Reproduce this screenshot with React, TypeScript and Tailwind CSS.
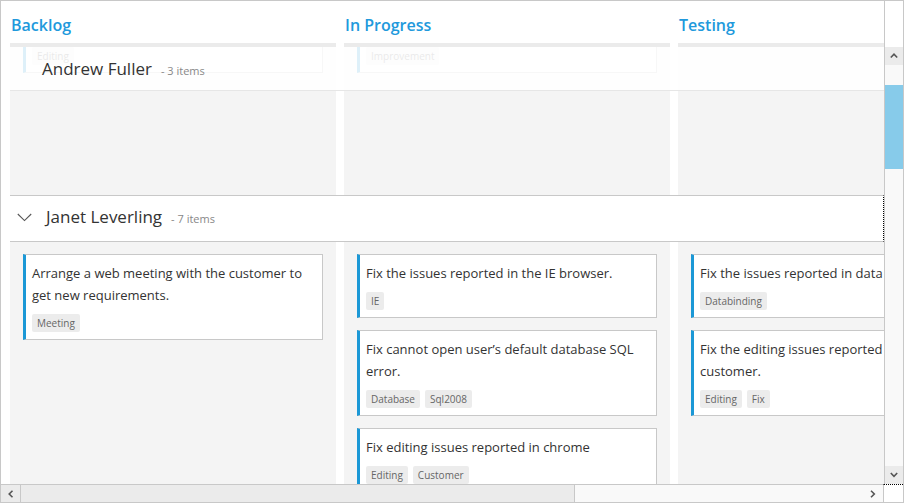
import React from 'react';

// Datos de las tarjetas
interface Card {
  text: string;
  tags: string[];
}

const columns = ['Backlog', 'In Progress', 'Testing'];

const andrewCards: Card[][] = [
  [{ text: 'Fix the issues reported by the customer.', tags: ['Editing'] }],
  [{ text: 'Improve application performance', tags: ['Improvement'] }],
  [],
];

const janetCards: Card[][] = [
  [{ text: 'Arrange a web meeting with the customer to get new requirements.', tags: ['Meeting'] }],
  [
    { text: 'Fix the issues reported in the IE browser.', tags: ['IE'] },
    { text: 'Fix cannot open user\u2019s default database SQL error.', tags: ['Database', 'Sql2008'] },
    { text: 'Fix editing issues reported in chrome', tags: ['Editing', 'Customer'] },
  ],
  [
    { text: 'Fix the issues reported in data binding.', tags: ['Databinding'] },
    { text: 'Fix the editing issues reported by the customer.', tags: ['Editing', 'Fix'] },
  ],
];

const Caret: React.FC<{ dir: 'up' | 'down' | 'left' | 'right' }> = ({ dir }) => {
  const points = {
    up: '0.8,4.5 4,1.2 7.2,4.5',
    down: '0.8,1 4,4.3 7.2,1',
    left: '4.5,0.8 1.2,4 4.5,7.2',
    right: '1,0.8 4.3,4 1,7.2',
  }[dir];
  const vertical = dir === 'up' || dir === 'down';
  return (
    <svg width={vertical ? 8 : 6} height={vertical ? 6 : 8} viewBox={vertical ? '0 0 8 6' : '0 0 6 8'}>
      <polyline points={points} fill="none" stroke="#555" strokeWidth="1.6" />
    </svg>
  );
};

const KanbanCard: React.FC<{ card: Card }> = ({ card }) => (
  <div className="shrink-0 bg-white border border-[#c8c8c8] border-l-[3px] border-l-[#1b98d6] pl-[6px] pr-[6px] pt-[7px] pb-[7px]">
    <p className="text-[13px] leading-[22px] text-[#333]">{card.text}</p>
    <div className="flex gap-[5px] mt-[8px]">
      {card.tags.map((tag) => (
        <span key={tag} className="h-[18px] px-[5px] rounded-[2px] bg-[#ececec] text-[10px] leading-[18px] text-[#666]">
          {tag}
        </span>
      ))}
    </div>
  </div>
);

function App() {
  return (
    <div className="w-[904px] h-[503px] border border-[#c8c8c8] bg-white flex flex-col font-['Open_Sans',sans-serif]">
      <div className="flex h-[483px]">
        {/* Tablero */}
        <div className="w-[883px] flex flex-col overflow-hidden">
          {/* Encabezados de columna */}
          <div className="flex h-[42px] shrink-0 pl-[9px] gap-[8px]">
            {columns.map((col) => (
              <div key={col} className="w-[326px] shrink-0 pl-px pt-[12px]">
                <span className="text-base leading-[22px] font-semibold text-[#2199dc]">{col}</span>
              </div>
            ))}
          </div>
          <div className="flex h-[4px] shrink-0 pl-[9px] gap-[8px]">
            {columns.map((col) => (
              <div key={col} className="w-[326px] shrink-0 bg-[#ebebeb]" />
            ))}
          </div>

          {/* Carril Andrew Fuller (desplazado bajo el encabezado fijo) */}
          <div className="relative h-[148px] shrink-0 flex pl-[9px] gap-[8px]">
            {andrewCards.map((cards, i) => (
              <div key={i} className="w-[326px] shrink-0 bg-[#f4f4f4] overflow-hidden px-[13px]">
                {cards.map((card) => (
                  <div key={card.text} className="-mt-[38px]">
                    <KanbanCard card={card} />
                  </div>
                ))}
              </div>
            ))}
            <div className="absolute left-[9px] right-0 top-0 h-[44px] bg-white/[0.86] border-b border-[#e6e6e6] flex items-center pl-[32px]">
              <div className="flex items-baseline gap-[9px]">
                <span className="text-[17px] text-[#333]">Andrew Fuller</span>
                <span className="text-[11px] text-[#888]">- 3 items</span>
              </div>
            </div>
          </div>

          {/* Carril Janet Leverling */}
          <div className="ml-[9px] h-[47px] shrink-0 border-y border-[#c8c8c8] border-r border-r-black [border-right-style:dotted] flex items-center pl-[7px] pb-[3px]">
            <svg width="15" height="9" viewBox="0 0 15 9">
              <polyline points="0.8,1 7.5,7.6 14.2,1" fill="none" stroke="#555" strokeWidth="1.1" />
            </svg>
            <div className="flex items-baseline gap-[9px] ml-[14px]">
              <span className="text-[17px] text-[#333]">Janet Leverling</span>
              <span className="text-[11px] text-[#888]">- 7 items</span>
            </div>
          </div>
          <div className="flex-1 flex pl-[9px] gap-[8px] min-h-0">
            {janetCards.map((cards, i) => (
              <div key={i} className="w-[326px] shrink-0 bg-[#f4f4f4] overflow-hidden px-[13px] pt-[12px] flex flex-col gap-[12px]">
                {cards.map((card) => (
                  <KanbanCard key={card.text} card={card} />
                ))}
              </div>
            ))}
          </div>
        </div>

        {/* Barra de desplazamiento vertical */}
        <div className="w-[19px] border-l border-[#c8c8c8] flex flex-col">
          <div className="h-[46px] bg-white" />
          <div className="h-[18px] bg-[#ebebeb] flex items-center justify-center">
            <Caret dir="up" />
          </div>
          <div className="h-[20px] bg-[#f9f9f9]" />
          <div className="h-[84px] bg-[#87cbea]" />
          <div className="flex-1 bg-[#f9f9f9]" />
          <div className="h-[18px] bg-[#ebebeb] flex items-center justify-center">
            <Caret dir="down" />
          </div>
        </div>
      </div>

      {/* Barra de desplazamiento horizontal */}
      <div className="flex h-[18px]">
        <div className="w-[882px] flex border-t border-[#c8c8c8]">
          <div className="w-[20px] border-r border-[#c8c8c8] bg-[#ebebeb] flex items-center justify-center">
            <Caret dir="left" />
          </div>
          <div className="w-[554px] border-r border-[#c8c8c8] bg-[#ebebeb]" />
          <div className="flex-1 bg-[#f9f9f9]" />
          <div className="w-[21px] bg-[#f9f9f9] flex items-center justify-center">
            <Caret dir="right" />
          </div>
        </div>
        <div className="flex-1 border-l border-[#c8c8c8] border-t border-t-black [border-top-style:dotted] bg-white" />
      </div>
    </div>
  );
}

export default App;
